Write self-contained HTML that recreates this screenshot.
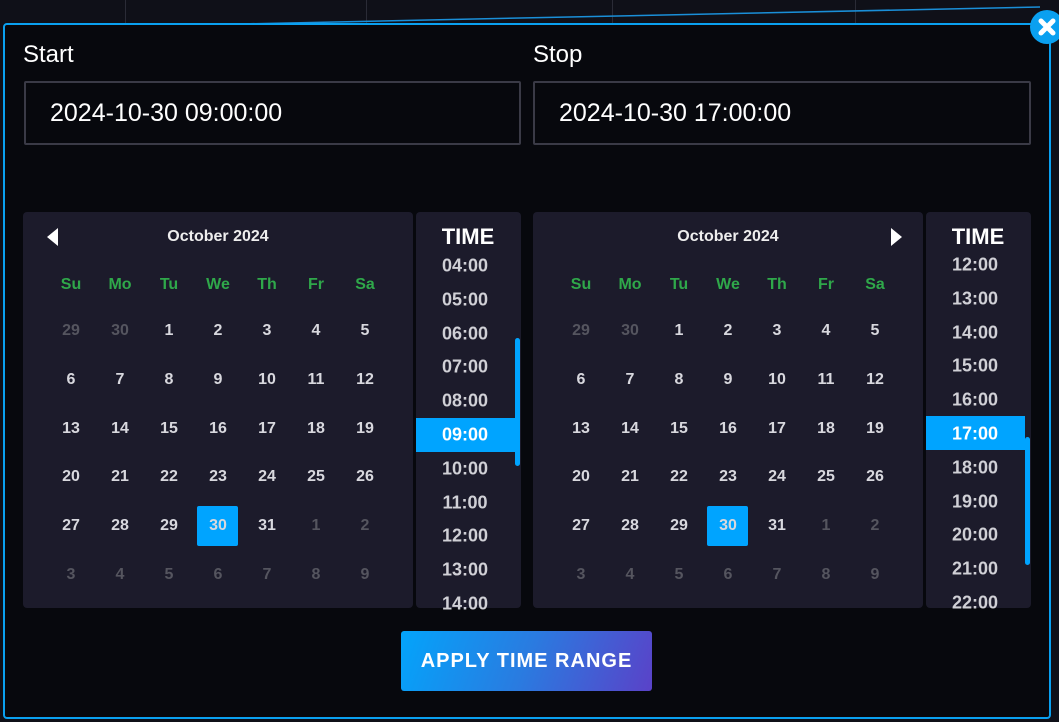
<!DOCTYPE html>
<html><head><style>
*{margin:0;padding:0;box-sizing:border-box}
body{width:1059px;height:722px;background:#0f1018;position:relative;overflow:hidden;font-family:"Liberation Sans",sans-serif;color:#fff}
.bgl{position:absolute;background:#2a2b36}
.modal{position:absolute;left:3px;top:23px;width:1048px;height:696px;background:#07080d;border:2px solid #0aa0f0;border-radius:4px}
.lbl{position:absolute;font-size:24px;color:#fff;top:41px}
.inp{position:absolute;top:81px;height:64px;border:2px solid #3a3a46;border-radius:2px;background:#07080d;font-size:25px;padding-left:24px;line-height:60px}
.panel{position:absolute;top:212px;height:396px;background:#1c1b2b;border-radius:4px;overflow:hidden}
.t{position:absolute;font-weight:bold;text-align:center;transform:translate(-50%,-50%);white-space:nowrap}
.hd{font-size:16px;color:#eee}
.dn{font-size:16px;color:#2fa84a}
.d{font-size:16px;color:#d8d8de}
.m{color:#55555f}
.sel{position:absolute;width:41px;height:40px;background:#00a4ff;border-radius:2px}
.tm{font-size:18px;color:#d0d0d6}
.tt{font-size:22px;color:#fff}
.hl{position:absolute;background:#00a4ff}
.sb{position:absolute;width:5px;background:#00a4ff;border-radius:3px}
.btn{position:absolute;left:401px;top:631px;width:251px;height:60px;border-radius:3px;background:linear-gradient(110deg,#03a4fb 0%,#2a7be0 50%,#5a42c8 100%);font-weight:bold;font-size:20px;letter-spacing:1px;text-align:center;line-height:60px}
.close{position:absolute;left:1030px;top:10px;width:34px;height:34px;border-radius:50%;background:#0aa0f0}
</style></head><body>
<div class="bgl" style="left:125px;top:0;width:1px;height:24px"></div>
<div class="bgl" style="left:366px;top:0;width:1px;height:24px"></div>
<div class="bgl" style="left:612px;top:0;width:1px;height:24px"></div>
<div class="bgl" style="left:855px;top:0;width:1px;height:24px"></div>
<svg style="position:absolute;left:0;top:0" width="1059" height="30"><line x1="240" y1="24" x2="1040" y2="7" stroke="#1a8fd8" stroke-width="1.5"/></svg>
<div class="modal"></div>
<div class="close"><svg width="34" height="34"><path d="M11 11L23 23M23 11L11 23" stroke="#fff" stroke-width="5" stroke-linecap="round"/></svg></div>
<div class="lbl" style="left:23px">Start</div>
<div class="lbl" style="left:533px">Stop</div>
<div class="inp" style="left:24px;width:497px">2024-10-30 09:00:00</div>
<div class="inp" style="left:533px;width:498px">2024-10-30 17:00:00</div>

<div class="panel" style="left:23px;width:390px"></div>
<div class="panel" style="left:416px;width:105px"></div>
<div class="panel" style="left:533px;width:390px"></div>
<div class="panel" style="left:926px;width:105px"></div>

<svg style="position:absolute;left:46px;top:227px" width="14" height="20"><path d="M12 1L12 19L1 10Z" fill="#fff"/></svg>
<svg style="position:absolute;left:889px;top:227px" width="14" height="20"><path d="M2 1L2 19L13 10Z" fill="#fff"/></svg>
<div class="t hd" style="left:218px;top:237px">October 2024</div>
<div class="t hd" style="left:728px;top:237px">October 2024</div>

<div class="sel" style="left:197px;top:506px"></div>
<div class="sel" style="left:707px;top:506px"></div>
<div id="cals"></div>

<div class="hl" style="left:416px;top:418px;width:100px;height:34px"></div>
<div class="hl" style="left:926px;top:416px;width:99px;height:34px"></div>
<div class="sb" style="left:515px;top:338px;height:128px"></div>
<div class="sb" style="left:1025px;top:437px;height:128px"></div>
<div class="t tt" style="left:468px;top:237px">TIME</div>
<div class="t tt" style="left:978px;top:237px">TIME</div>
<div id="times"></div>

<div class="btn">APPLY TIME RANGE</div>
<script>
var h='';
var dn=['Su','Mo','Tu','We','Th','Fr','Sa'];
var days=[29,30,1,2,3,4,5,6,7,8,9,10,11,12,13,14,15,16,17,18,19,20,21,22,23,24,25,26,27,28,29,30,31,1,2,3,4,5,6,7,8,9];
[71,581].forEach(function(x0){
 for(var c=0;c<7;c++){var x=x0+c*49;
  h+='<div class="t dn" style="left:'+x+'px;top:285px">'+dn[c]+'</div>';
  for(var r=0;r<6;r++){var i=r*7+c;var m=(i<2||i>32)?' m':'';
   h+='<div class="t d'+m+'" style="left:'+x+'px;top:'+(331+r*48.8)+'px">'+days[i]+'</div>';}
 }
});
document.getElementById('cals').innerHTML=h;
h='';
for(var k=0;k<11;k++){
 h+='<div class="t tm" style="left:465px;top:'+(266+k*33.8)+'px;'+(k==5?'color:#fff':'')+'">'+('0'+(4+k)).slice(-2)+':00</div>';
 h+='<div class="t tm" style="left:975px;top:'+(265+k*33.8)+'px;'+(k==5?'color:#fff':'')+'">'+(12+k)+':00</div>';
}
document.getElementById('times').innerHTML=h;
</script>
</body></html>
